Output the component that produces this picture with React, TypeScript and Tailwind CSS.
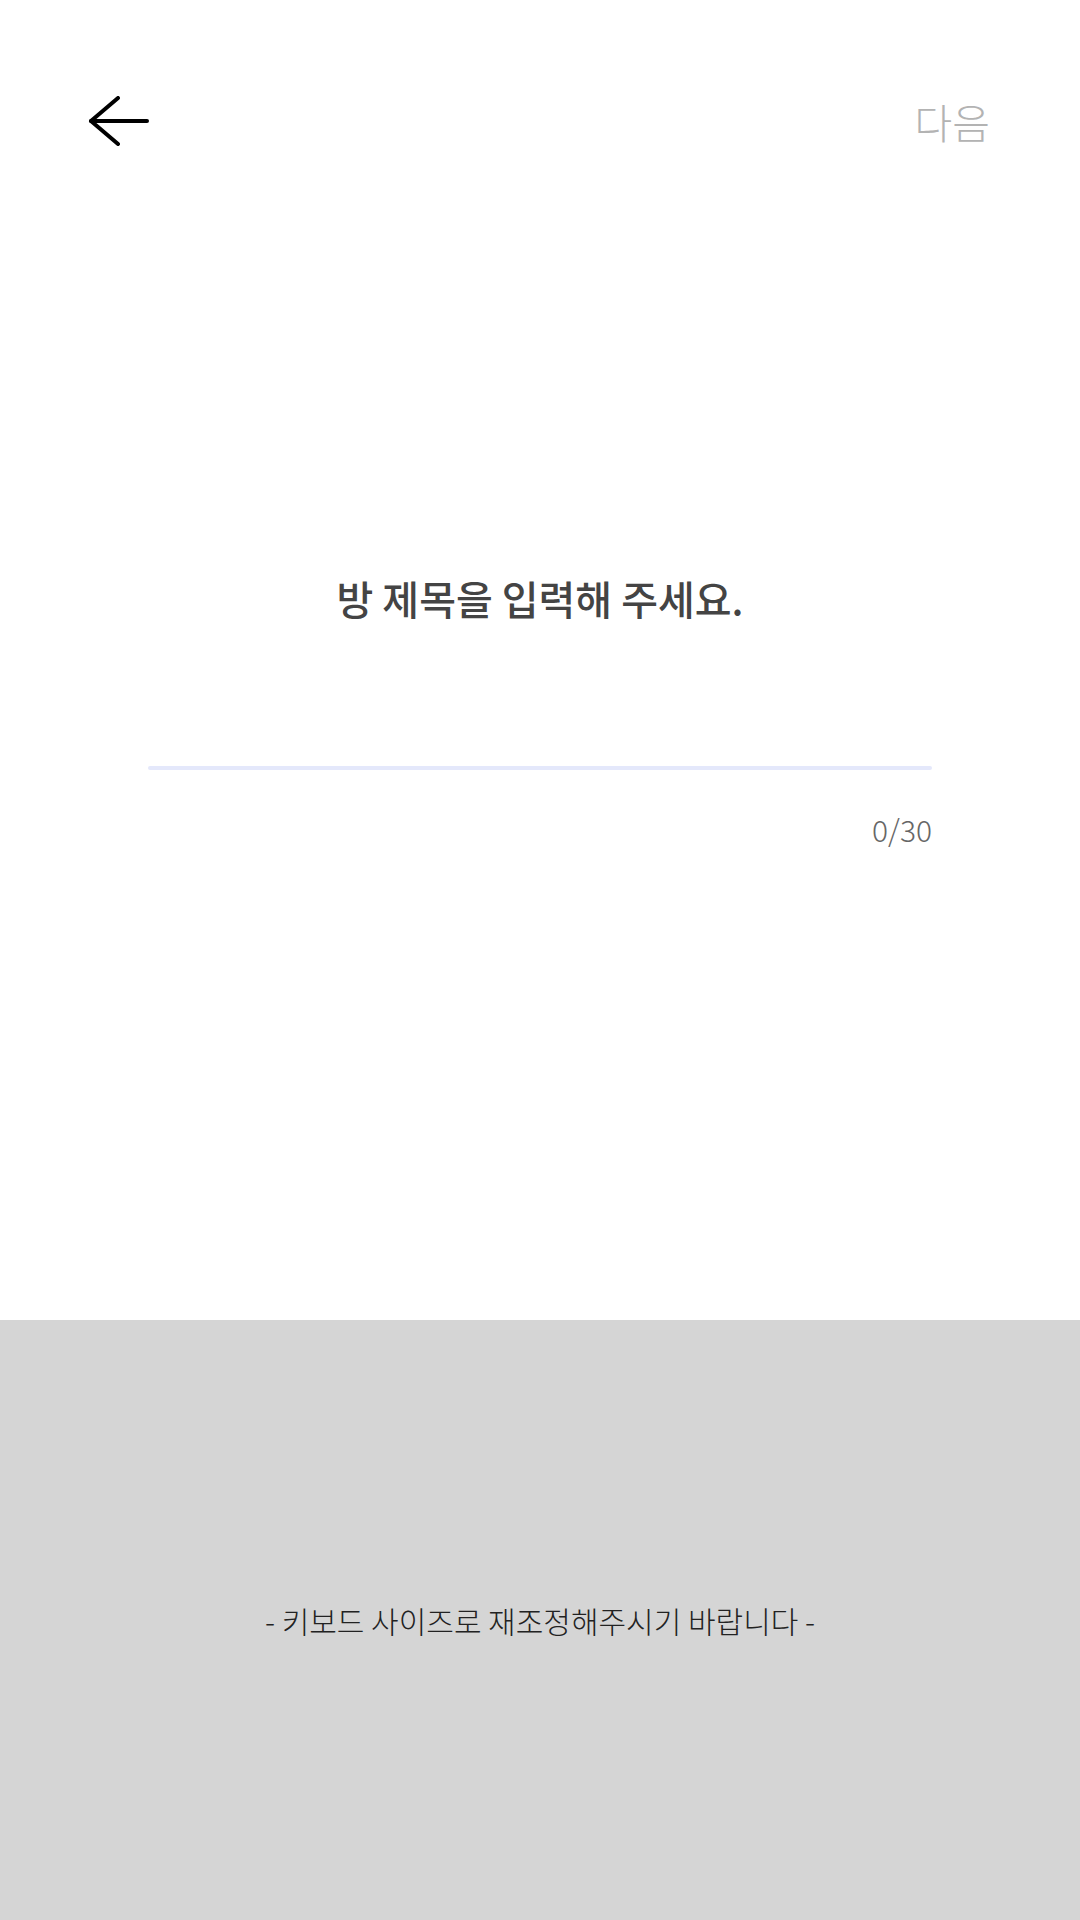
const font = { fontFamily: '"Noto Sans CJK KR", "Noto Sans", sans-serif' };

const BackArrow = () => (
  <svg width="62" height="50" viewBox="0 0 62 50" fill="none" stroke="#000" strokeWidth="4" strokeLinecap="round" strokeLinejoin="round">
    <path d="M30 2 L3 25 L30 48" />
    <path d="M3 25 H59" />
  </svg>
);

const App = () => {
  return (
    <div className="w-[1080px] h-[1920px] flex flex-col bg-white" style={font}>
      <div className="h-[1320px] flex flex-col">
        {/* Top bar */}
        <div className="flex items-center justify-between pl-[88px] pr-[90px] mt-[96px] h-[50px]">
          <button className="flex items-center">
            <BackArrow />
          </button>
          <span className="text-[41px] leading-none font-light text-[#b3b3b3]">다음</span>
        </div>

        {/* Title */}
        <h1 className="mt-[432px] text-center text-[40px] leading-none font-medium text-[#444444]">
          방 제목을 입력해 주세요.
        </h1>

        {/* Input line */}
        <div className="mx-auto mt-[148px] w-[784px]">
          <input type="text" className="hidden" maxLength={30} />
          <div className="h-[4px] rounded-full bg-[#e4e8fb]" />
          <div className="mt-[44px] text-right text-[30px] leading-none font-light text-[#666666]">0/30</div>
        </div>
      </div>

      {/* Keyboard placeholder */}
      <div className="flex-1 bg-[#d5d5d5] flex items-center justify-center">
        <p className="text-[30px] leading-none font-light text-[#222222]">- 키보드 사이즈로 재조정해주시기 바랍니다 -</p>
      </div>
    </div>
  );
};

export default App;
